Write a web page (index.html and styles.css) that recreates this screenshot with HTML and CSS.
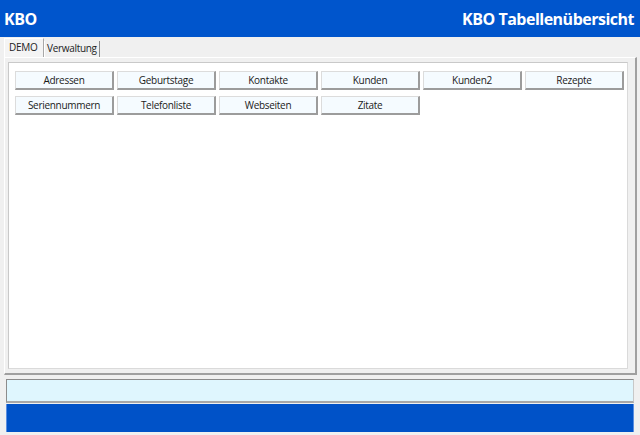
FILE: index.html
```html
<!DOCTYPE html>
<html lang="de">
<head>
<meta charset="utf-8">
<title>KBO Tabellenübersicht</title>
<link rel="stylesheet" href="styles.css">
</head>
<body>
<div class="app">
  <header class="header">
    <span class="title-left">KBO</span>
    <span class="title-right">KBO Tabellenübersicht</span>
  </header>
  <nav class="tabs">
    <div class="tab tab-active">DEMO</div>
    <div class="tab">Verwaltung</div>
  </nav>
  <section class="panel">
    <div class="page">
      <div class="grid">
        <button class="btn">Adressen</button>
        <button class="btn">Geburtstage</button>
        <button class="btn">Kontakte</button>
        <button class="btn">Kunden</button>
        <button class="btn">Kunden2</button>
        <button class="btn">Rezepte</button>
        <button class="btn">Seriennummern</button>
        <button class="btn">Telefonliste</button>
        <button class="btn">Webseiten</button>
        <button class="btn">Zitate</button>
      </div>
    </div>
  </section>
  <div class="status"></div>
  <footer class="footer"></footer>
</div>
</body>
</html>
```
FILE: styles.css
```css
html, body {
  margin: 0;
  padding: 0;
}
body {
  background: #f0f0f0;
  font-family: "Open Sans", "Noto Sans", "DejaVu Sans", sans-serif;
  width: 640px;
  height: 435px;
  overflow: hidden;
}
.app {
  display: flex;
  flex-direction: column;
  height: 435px;
}
.header {
  height: 37px;
  background: #0055cc;
  color: #ffffff;
  display: flex;
  align-items: center;
  justify-content: space-between;
  padding: 0 6px 0 4px;
  font-weight: 700;
  font-size: 16px;
  letter-spacing: -0.5px;
}
.tabs {
  display: flex;
  align-items: flex-end;
  height: 20px;
  padding-left: 4px;
}
.tab {
  font-size: 10px;
  letter-spacing: -0.3px;
  color: #222;
  height: 16px;
  line-height: 15px;
  padding: 0 2px 0 2px;
  border-right: 1px solid #8a8a8a;
  border-left: 1px solid #ffffff;
  box-sizing: border-box;
}
.tab-active {
  height: 19px;
  line-height: 16px;
  width: 40px;
  padding: 0 0 0 4px;
  background: #f4f4f4;
  border-top: 1px solid #ffffff;
  border-right: 1px solid #a8a8a8;
}
.panel {
  margin: 0 3px 0 4px;
  height: 318px;
  box-sizing: border-box;
  border-left: 1px solid #ffffff;
  border-top: 1px solid #ffffff;
  border-right: 2px solid #a0a0a0;
  border-bottom: 2px solid #a0a0a0;
  padding: 4px 7px 4px 3px;
}
.page {
  height: 100%;
  box-sizing: border-box;
  background: #ffffff;
  border: 1px solid #c9c9c9;
  border-right-color: #dadada;
  border-bottom-color: #dadada;
  padding: 8px 0 0 6px;
}
.grid {
  display: grid;
  grid-template-columns: repeat(6, 99px);
  column-gap: 3px;
  row-gap: 6px;
}
.btn {
  height: 19px;
  margin: 0;
  padding: 0;
  font-family: inherit;
  font-size: 10px;
  letter-spacing: -0.3px;
  color: #1a1a1a;
  background: #f5fbff;
  border-top: 1px solid #dcdcdc;
  border-left: 1px solid #dcdcdc;
  border-right: 2px solid #9c9c9c;
  border-bottom: 2px solid #9c9c9c;
  box-sizing: border-box;
  text-align: center;
}
.status {
  margin: 4px 6px 0 6px;
  height: 24px;
  box-sizing: border-box;
  background: #dff6fe;
  border-top: 1px solid #8c8c8c;
  border-left: 1px solid #8c8c8c;
  border-right: 1px solid #c8c8c8;
  border-bottom: 2px solid #a8a8a8;
}
.footer {
  margin: 1px 6px 0 6px;
  height: 28px;
  background: #0052c8;
  border-left: 1px solid #5a8ee0;
  border-right: 1px solid #5a8ee0;
}
```
